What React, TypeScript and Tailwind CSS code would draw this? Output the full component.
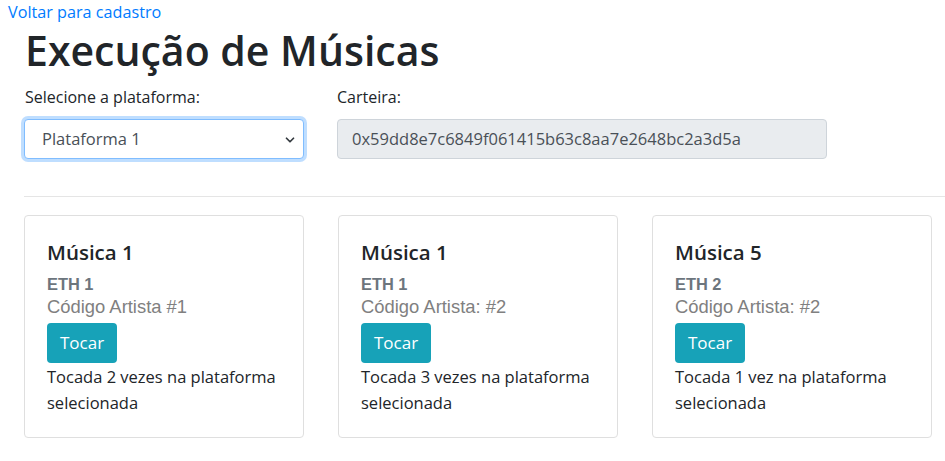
import { ChevronDown } from 'lucide-react';

const musicas = [
  { titulo: 'Música 1', eth: 'ETH 1', artista: 'Código Artista #1', vezes: 'Tocada 2 vezes na plataforma selecionada' },
  { titulo: 'Música 1', eth: 'ETH 1', artista: 'Código Artista: #2', vezes: 'Tocada 3 vezes na plataforma selecionada' },
  { titulo: 'Música 5', eth: 'ETH 2', artista: 'Código Artista: #2', vezes: 'Tocada 1 vez na plataforma selecionada' },
];

export default function App() {
  return (
    <div className="min-h-[461px] bg-white text-[#212529] font-['Open_Sans',sans-serif] overflow-hidden">
      {/* Link */}
      <div className="pl-2 h-[24px] leading-[24px] text-[16.2px]">
        <a href="#" className="text-[#007bff]">Voltar para cadastro</a>
      </div>

      <div className="pl-6">
        {/* Title */}
        <h1 className="text-[41px] font-semibold leading-[48px] mt-[2px] ml-[1px]">Execução de Músicas</h1>

        {/* Form row */}
        <div className="flex gap-[33px] mt-[11px]">
          <div className="w-[280px]">
            <label className="block text-[16px] leading-[24px] ml-[1px]">Selecione a plataforma:</label>
            <div className="mt-[10px] relative h-[40px] rounded-[4px] border border-[#80bdff] shadow-[0_0_0_3px_rgba(0,123,255,0.25)] bg-white flex items-center pl-[17px] text-[16.5px] text-[#495057]">
              Plataforma 1
              <ChevronDown size={14} strokeWidth={3} className="absolute right-[6px] top-[13px] text-[#343a40]" />
            </div>
          </div>
          <div className="w-[490px]">
            <label className="block text-[16px] leading-[24px]">Carteira:</label>
            <div className="mt-[10px] h-[40px] rounded-[4px] border border-[#ced4da] bg-[#e9ecef] flex items-center pl-[14px] text-[16.5px] text-[#495057]">
              0x59dd8e7c6849f061415b63c8aa7e2648bc2a3d5a
            </div>
          </div>
        </div>

        <hr className="mt-[37px] border-0 border-t border-[#e5e5e5] -mr-4" />

        {/* Cards */}
        <div className="flex gap-[34px] mt-[18px]">
          {musicas.map((m, i) => (
            <div
              key={i}
              className="w-[280px] border border-[#dfdfdf] rounded-[4px] px-[22px] pt-[21px] pb-[21px]"
            >
              <h5 className="text-[20.5px] font-semibold leading-[30px]">{m.titulo}</h5>
              <div className="mt-[7px] font-['Liberation_Sans',sans-serif] font-bold text-[16.4px] leading-[20px] text-[#6c757d]">{m.eth}</div>
              <div className="mt-[1px] font-['Liberation_Sans',sans-serif] text-[18.4px] leading-[24px] text-[#808080]">{m.artista}</div>
              <button className="mt-[4px] h-[40px] px-[13px] rounded-[4px] bg-[#17a2b8] text-white text-[17px]">Tocar</button>
              <p className="mt-[1px] text-[16.5px] leading-[26px]">{m.vezes}</p>
            </div>
          ))}
        </div>
      </div>
    </div>
  );
}
